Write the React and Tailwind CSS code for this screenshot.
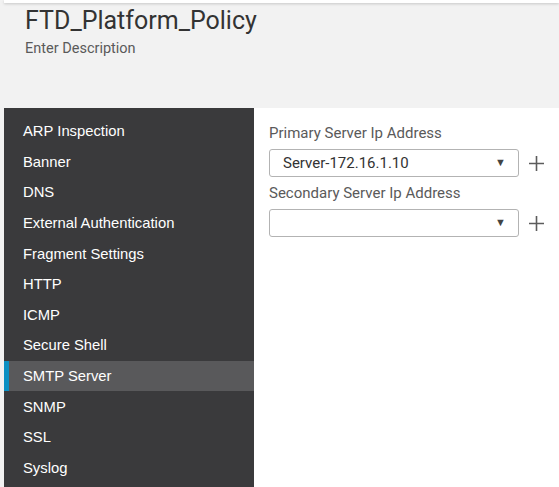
const navItems = [
  "ARP Inspection",
  "Banner",
  "DNS",
  "External Authentication",
  "Fragment Settings",
  "HTTP",
  "ICMP",
  "Secure Shell",
  "SMTP Server",
  "SNMP",
  "SSL",
  "Syslog",
];

const PlusIcon = () => (
  <svg className="ml-[9px] h-[17px] w-[17px]" viewBox="0 0 17 17" fill="none">
    <path d="M8.5 1v15M1 8.5h15" stroke="#5c5c5c" strokeWidth="1.6" />
  </svg>
);

const SelectField = ({ label, value }) => (
  <div className="flex flex-col">
    <label className="text-[15px] leading-[20px] text-[#5a5a5a]">{label}</label>
    <div className="mt-[6px] flex items-center">
      <div className="flex h-[28px] w-[250px] items-center justify-between rounded-[3px] border border-[#b3b3b3] bg-white pl-[13px] pr-[12px]">
        <span className="text-[15px] text-[#333]">{value}</span>
        <span className="text-[11px] text-[#444]">▼</span>
      </div>
      <PlusIcon />
    </div>
  </div>
);

const App = () => {
  return (
    <div className="h-[487px] w-full overflow-hidden bg-[#f2f2f2] font-['Roboto',sans-serif]">
      <div className="ml-[4px] h-[3px] bg-white shadow-[0_1px_3px_rgba(0,0,0,0.18)]" />

      <div className="h-[105px] pl-[25px] pt-[3px]">
        <h1 className="text-[25px] leading-[30px] text-[#333]">FTD_Platform_Policy</h1>
        <p className="mt-[3px] text-[14.5px] leading-[20px] text-[#5a5a5a]">Enter Description</p>
      </div>

      <div className="ml-[4px] flex h-[379px]">
        <nav className="w-[250px] bg-[#3a3a3c] pt-[8px]">
          {navItems.map((item) => {
            const active = item === "SMTP Server";
            return (
              <div
                key={item}
                className={
                  active
                    ? "flex h-[30.6px] items-center border-l-[5px] border-[#0a8fc2] bg-[#59595b] pl-[14px] text-[14.8px] text-white font-['Liberation_Sans',sans-serif]"
                    : "flex h-[30.6px] items-center pl-[19px] text-[14.8px] text-white font-['Liberation_Sans',sans-serif]"
                }
              >
                {item}
              </div>
            );
          })}
        </nav>

        <main className="flex-1 bg-white pl-[15px] pt-[15px]">
          <div className="flex flex-col gap-[6px]">
            <SelectField label="Primary Server Ip Address" value="Server-172.16.1.10" />
            <SelectField label="Secondary Server Ip Address" value="" />
          </div>
        </main>
      </div>
    </div>
  );
};

export default App;
